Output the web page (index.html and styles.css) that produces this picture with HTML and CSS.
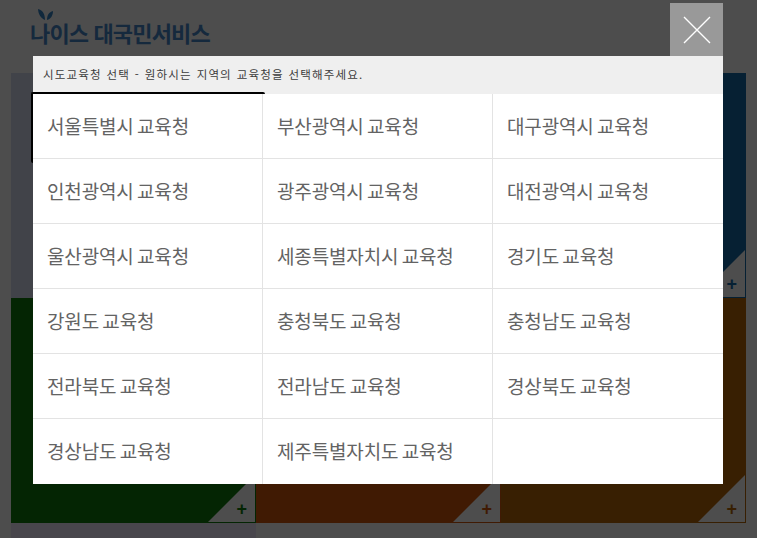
FILE: index.html
```html
<!DOCTYPE html>
<html lang="ko">
<head>
<meta charset="utf-8">
<title>나이스 대국민서비스</title>
<link rel="stylesheet" href="styles.css">
</head>
<body>
<div class="page">
  <header class="site-header">
    <svg class="sprout" width="16" height="12" viewBox="0 0 16 12"><path d="M7 12C3 10 .5 7 0 1c4 1 7 4 7 11zM9 12c0-5 2-8 6-9 0 4-2 8-6 9z"/></svg>
    <h1 class="logo">나이스 대국민서비스</h1>
  </header>
  <main class="tiles">
    <div class="tile tile-slate"><span class="corner"><span class="plus">+</span></span></div>
    <div class="tile tile-mid"><span class="corner"><span class="plus">+</span></span></div>
    <div class="tile tile-navy"><span class="corner"><span class="plus">+</span></span></div>
    <div class="tile tile-green"><span class="corner"><span class="plus">+</span></span></div>
    <div class="tile tile-rust"><span class="corner"><span class="plus">+</span></span></div>
    <div class="tile tile-brown"><span class="corner"><span class="plus">+</span></span></div>
    <div class="tile-foot"></div>
  </main>
</div>
<button class="close" aria-label="닫기">
  <svg width="28" height="28" viewBox="0 0 28 28"><path d="M1 1l26 26M27 1L1 27" stroke="#fff" stroke-width="1.4" fill="none"/></svg>
</button>
<section class="modal">
  <h2 class="modal-title">시도교육청 선택 - 원하시는 지역의 교육청을 선택해주세요.</h2>
  <ul class="offices">
    <li class="office is-focus"><a>서울특별시 교육청</a></li>
    <li class="office"><a>부산광역시 교육청</a></li>
    <li class="office"><a>대구광역시 교육청</a></li>
    <li class="office"><a>인천광역시 교육청</a></li>
    <li class="office"><a>광주광역시 교육청</a></li>
    <li class="office"><a>대전광역시 교육청</a></li>
    <li class="office"><a>울산광역시 교육청</a></li>
    <li class="office"><a>세종특별자치시 교육청</a></li>
    <li class="office"><a>경기도 교육청</a></li>
    <li class="office"><a>강원도 교육청</a></li>
    <li class="office"><a>충청북도 교육청</a></li>
    <li class="office"><a>충청남도 교육청</a></li>
    <li class="office"><a>전라북도 교육청</a></li>
    <li class="office"><a>전라남도 교육청</a></li>
    <li class="office"><a>경상북도 교육청</a></li>
    <li class="office"><a>경상남도 교육청</a></li>
    <li class="office"><a>제주특별자치도 교육청</a></li>
    <li class="office"></li>
  </ul>
</section>
</body>
</html>
```
FILE: styles.css
```css
* { box-sizing: border-box; }
html, body { margin: 0; height: 100%; overflow: hidden; }
body { background: #4d4d4d; font-family: "Noto Sans CJK KR", "Noto Sans", sans-serif; }
.page { width: 757px; height: 538px; background: #4d4d4d; overflow: hidden; }
.site-header { position: relative; height: 73px; padding: 16px 0 0 30px; }
.sprout { position: absolute; left: 38px; top: 8px; fill: #10283c; }
.logo { margin: 0; font-size: 22px; line-height: 32px; font-weight: 700; letter-spacing: -.85px; color: #15293d; }
.tiles { display: grid; grid-template-columns: 245px 245px 245px; grid-template-rows: 225px 225px 40px; margin-left: 11px; width: 736px; }
.tile { position: relative; border: 1px solid; border-left-width: 0; border-top-width: 0; }
.tile-slate { background: #414349; border-color: #414349; }
.tile-mid { background: #1e2a36; border-color: #1e2a36; }
.tile-navy { background: #062033; border-color: #062033; }
.tile-green { background: #042503; border-color: #042503; }
.tile-rust { background: #401a03; border-color: #401a03; }
.tile-brown { background: #381f02; border-color: #381f02; }
.tile-foot { background: #48464c; }
.corner { position: absolute; right: 0; bottom: 0; width: 47px; height: 47px; background: #4d4d4d; clip-path: polygon(100% 0, 100% 100%, 0 100%); }
.plus { position: absolute; right: 8px; bottom: 3px; font: 700 18px/20px "Liberation Sans", sans-serif; color: #042503; }
.tile-navy .plus { color: #062033; }
.tile-rust .plus { color: #401a03; }
.tile-brown .plus { color: #381f02; }
.close { position: absolute; left: 670px; top: 3px; width: 53px; height: 53px; padding: 0; border: 0; background: #999; display: flex; align-items: center; justify-content: center; }
.modal { position: absolute; left: 33px; top: 56px; width: 690px; background: #fff; }
.modal-title { margin: 0; height: 38px; padding-left: 10px; background: #efefef; font-size: 11.5px; line-height: 36px; font-weight: 400; letter-spacing: 1.15px; word-spacing: .5px; color: #3c3c3c; }
.offices { display: grid; grid-template-columns: repeat(3, 230px); grid-auto-rows: 65px; margin: 0; padding: 0; list-style: none; }
.office { position: relative; border-right: 1px solid #e3e3e3; border-bottom: 1px solid #e3e3e3; padding-left: 14px; font-size: 19px; line-height: 63px; font-weight: 400; letter-spacing: -.15px; word-spacing: -1.8px; color: #636363; }
.office:nth-child(3n) { border-right: 0; }
.office:nth-last-child(-n+3) { border-bottom: 0; }
.is-focus::after { content: ""; position: absolute; left: -2px; top: -2px; width: 232px; height: 69px; border-left: 2px solid #000; border-top: 2px solid #000; border-radius: 2px 2px 0 2px; }
```
